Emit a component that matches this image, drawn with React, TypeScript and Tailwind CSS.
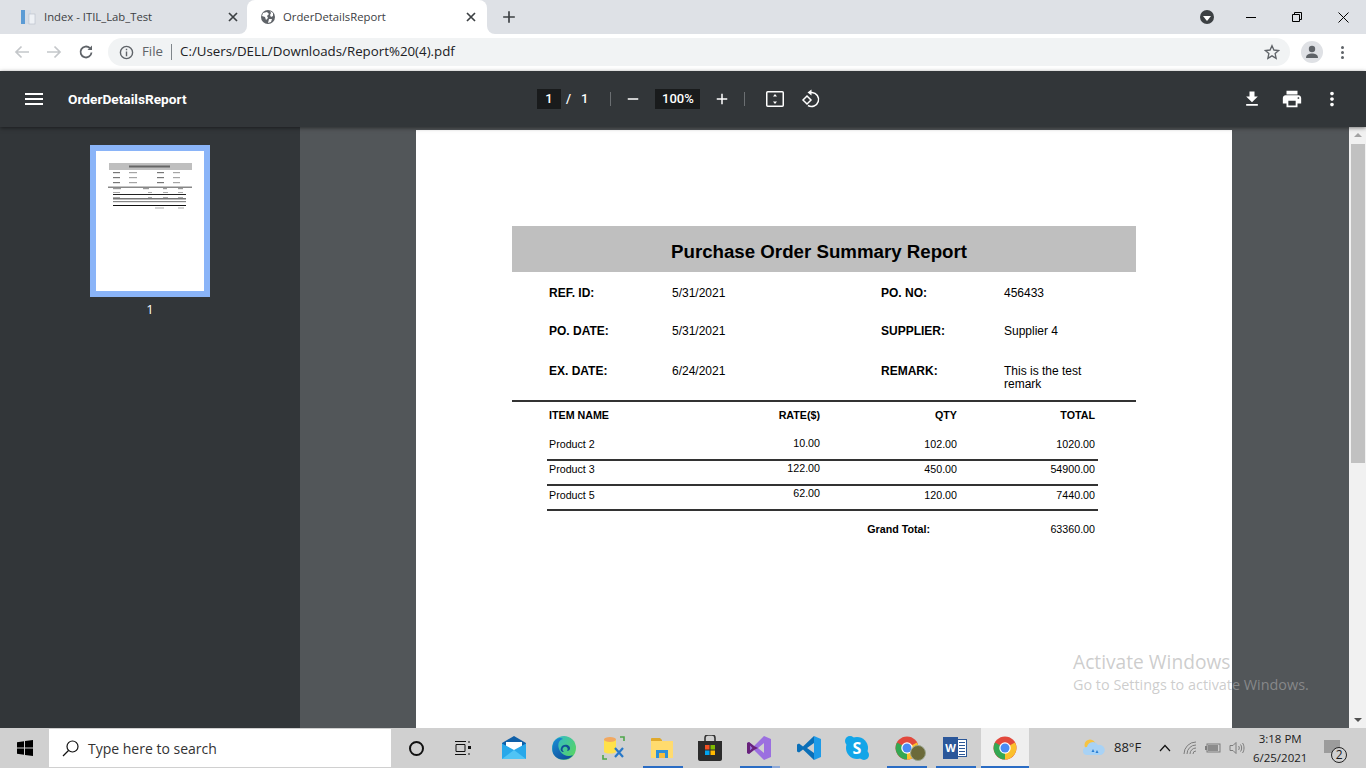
import { MdAdd, MdFileDownload, MdMenu, MdMoreVert, MdPrint, MdRemove } from "react-icons/md"

const ui = "font-['Open_Sans',sans-serif]"
const pdf = "font-['Liberation_Sans',Arial,sans-serif]"

const infoRows = [
  { label1: "REF. ID:", value1: "5/31/2021", label2: "PO. NO:", value2: "456433", pad: "pt-[14px]" },
  { label1: "PO. DATE:", value1: "5/31/2021", label2: "SUPPLIER:", value2: "Supplier 4", pad: "pt-[24px]" },
  { label1: "EX. DATE:", value1: "6/24/2021", label2: "REMARK:", value2: "This is the test remark", pad: "pt-[26px]" },
]

const items = [
  { name: "Product 2", rate: "10.00", qty: "102.00", total: "1020.00", rowH: "h-[46px]", namePt: "pt-[23px]", ratePt: "pt-[22px]" },
  { name: "Product 3", rate: "122.00", qty: "450.00", total: "54900.00", rowH: "h-[25px]", namePt: "pt-[2px]", ratePt: "pt-[1px]" },
  { name: "Product 5", rate: "62.00", qty: "120.00", total: "7440.00", rowH: "h-[25px]", namePt: "pt-[3px]", ratePt: "pt-[1px]" },
]

function ChromeLogo({ size = 24 }: { size?: number }) {
  return (
    <svg width={size} height={size} viewBox="0 0 48 48">
      <circle cx="24" cy="24" r="23" fill="#e2483c" />
      <path d="M24 24 L44 13 A23 23 0 0 1 24 47 Z" fill="#fbc02d" />
      <path d="M24 24 L24 47 A23 23 0 0 1 4 13 Z" fill="#34a853" />
      <circle cx="24" cy="24" r="11.5" fill="#fff" />
      <circle cx="24" cy="24" r="9" fill="#4a8af4" />
    </svg>
  )
}

function WindowsLogo() {
  return (
    <svg width="16" height="16" viewBox="0 0 16 16" fill="#000">
      <path d="M0 2.2 7 1.2V7.5H0zM8 1 16 0V7.5H8zM0 8.5H7V14.8L0 13.8zM8 8.5H16V16L8 15z" />
    </svg>
  )
}

function MailIcon() {
  return (
    <svg width="24" height="24" viewBox="0 0 24 24">
      <path d="M0 7 12 0 24 7V9L12 15 0 9Z" fill="#0f5fa8" />
      <path d="M4 5H20V12L12 16 4 12Z" fill="#fff" transform="translate(0 1)" />
      <path d="M0 7.5 12 14 24 7.5V23H0Z" fill="#28a8ea" />
      <path d="M0 23 12 14 24 23Z" fill="#50c4f5" />
    </svg>
  )
}

function EdgeIcon() {
  return (
    <svg width="24" height="24" viewBox="0 0 24 24">
      <defs>
        <linearGradient id="edgeA" x1="0" y1="0" x2="1" y2="0.6">
          <stop offset="0" stopColor="#2cb6d8" />
          <stop offset="1" stopColor="#55d36a" />
        </linearGradient>
        <linearGradient id="edgeB" x1="0" y1="0" x2="0.6" y2="1">
          <stop offset="0" stopColor="#1a8fd6" />
          <stop offset="1" stopColor="#10529e" />
        </linearGradient>
      </defs>
      <circle cx="12" cy="12" r="12" fill="url(#edgeA)" />
      <path d="M1 8C3 2 9 1 11 3 6 4 5 10 8 15 11 20 17 21 21 19 17 25 6 25 2 19 0 16 0 12 1 8Z" fill="url(#edgeB)" />
      <path d="M9 12C10 8 15 8 17 10 19 12 18 15 15 15 17 12 14 10 12 11 10 12 10 15 12 16 9 16 8 14 9 12Z" fill="#0f4f96" />
    </svg>
  )
}

function DbToolIcon() {
  return (
    <svg width="24" height="24" viewBox="0 0 24 24">
      <path d="M2 3H14V16C12 18 4 18 2 16Z" fill="#ffe14a" />
      <ellipse cx="8" cy="3.500" rx="6" ry="2.500" fill="#f2a860" />
      <path d="M18 1H22V5M1 19V23H5" fill="none" stroke="#4ea64a" strokeWidth="1.6" />
      <path d="M13 21 21 12M21 21 13 12" stroke="#2878c8" strokeWidth="2.2" />
    </svg>
  )
}

function FolderIcon() {
  return (
    <svg width="22" height="20" viewBox="0 0 22 20">
      <path d="M0 1C0 .5.5 0 1 0H9L11 2V5H0Z" fill="#e0a92c" />
      <rect x="0" y="3" width="22" height="17" fill="#ffdb6e" />
      <path d="M5 12H17V20H14V15H8V20H5Z" fill="#2d8fd8" />
      <rect x="8" y="15" width="6" height="5" fill="#f5bd3c" />
    </svg>
  )
}

function StoreIcon() {
  return (
    <svg width="24" height="26" viewBox="0 0 24 26">
      <path d="M7 7V3C7 1 8.5 0 10 0H14C15.500 0 17 1 17 3V7" fill="none" stroke="#333" strokeWidth="1.6" />
      <path d="M0 6H24V24C24 25 23 26 22 26H2C1 26 0 25 0 24Z" fill="#2b2b2b" />
      <rect x="7" y="10" width="4.500" height="4.500" fill="#f25022" />
      <rect x="12.500" y="10" width="4.500" height="4.500" fill="#7fba00" />
      <rect x="7" y="15.500" width="4.500" height="4.500" fill="#00a4ef" />
      <rect x="12.500" y="15.500" width="4.500" height="4.500" fill="#ffb900" />
    </svg>
  )
}

function VisualStudioIcon() {
  return (
    <svg width="24" height="24" viewBox="0 0 24 24">
      <path d="M17 0 24 3V21L17 24 7 14 2 18 0 17V7L2 6 7 10ZM17 7 11 12 17 17Z" fill="#9b6fe0" />
      <path d="M2 6 7 10 11 12 7 14 2 18 0 17V7ZM3 9.500V14.500L5.500 12Z" fill="#68217a" />
    </svg>
  )
}

function VsCodeIcon() {
  return (
    <svg width="24" height="24" viewBox="0 0 24 24">
      <path d="M17 0 24 3V21L17 24Z" fill="#1e9be8" />
      <path d="M17 0 6 10.500 2 7.500 0 8.500V15.500L2 16.500 6 13.500 17 24V17L10 12 17 7Z" fill="#0a6fb8" />
    </svg>
  )
}

function SkypeIcon() {
  return (
    <div className="relative flex h-[22px] w-[22px] items-center justify-center rounded-full bg-[#12a5e8]">
      <span className="absolute -left-[1px] -top-[1px] h-[10px] w-[10px] rounded-full bg-[#12a5e8]" />
      <span className="absolute -bottom-[1px] -right-[1px] h-[10px] w-[10px] rounded-full bg-[#12a5e8]" />
      <span className={`relative text-[16px] font-bold leading-none text-white ${ui}`}>S</span>
    </div>
  )
}

function WordIcon() {
  return (
    <div className="relative h-[22px] w-[24px]">
      <div className="absolute right-0 top-[2px] flex h-[18px] w-[14px] flex-col justify-center gap-[2px] border border-[#2b5797] bg-white pl-[5px] pr-[1px]">
        <span className="h-[1px] bg-[#2b5797]" />
        <span className="h-[1px] bg-[#2b5797]" />
        <span className="h-[1px] bg-[#2b5797]" />
        <span className="h-[1px] bg-[#2b5797]" />
        <span className="h-[1px] bg-[#2b5797]" />
      </div>
      <div className={`absolute left-0 top-0 flex h-[22px] w-[15px] items-center justify-center bg-[#2b579a] text-[11px] font-bold text-white ${ui}`}>W</div>
    </div>
  )
}

function Thumbnail() {
  return (
    <svg width="108" height="140" viewBox="0 0 108 140" className="block bg-white">
      <rect x="13" y="12" width="83" height="7" fill="#bfbfbf" />
      <rect x="33" y="14.500" width="41" height="2" fill="#666" />
      {[21, 26, 31].map((y) => (
        <g key={y}>
          <rect x="17" y={y} width="7" height="1.200" fill="#777" />
          <rect x="33" y={y} width="8" height="1.200" fill="#a5a5a5" />
          <rect x="61" y={y} width="7" height="1.200" fill="#777" />
          <rect x="77" y={y} width="7" height="1.200" fill="#a5a5a5" />
        </g>
      ))}
      <rect x="12" y="35.500" width="84" height="1.500" fill="#888" />
      <rect x="17" y="37" width="8" height="1.200" fill="#999" />
      <rect x="47" y="37" width="6" height="1.200" fill="#999" />
      <rect x="67" y="37" width="4" height="1.200" fill="#999" />
      <rect x="82" y="37" width="5" height="1.200" fill="#999" />
      {[41, 46, 50].map((y) => (
        <g key={y}>
          <rect x="17" y={y} width="7" height="1" fill="#aaa" />
          <rect x="52" y={y} width="4" height="1" fill="#aaa" />
          <rect x="67" y={y} width="5" height="1" fill="#aaa" />
          <rect x="82" y={y} width="5" height="1" fill="#aaa" />
        </g>
      ))}
      <rect x="17" y="43" width="73" height="1" fill="#222" />
      <rect x="17" y="47" width="73" height="1.500" fill="#777" />
      <rect x="17" y="50" width="73" height="1.200" fill="#888" />
      <rect x="17" y="54" width="73" height="1" fill="#111" />
      <rect x="59" y="56.500" width="9" height="1" fill="#aaa" />
      <rect x="82" y="56.500" width="6" height="1" fill="#aaa" />
    </svg>
  )
}

function CloseGlyph() {
  return (
    <svg width="10" height="10" viewBox="0 0 10 10" stroke="#3c4043" strokeWidth="1.7">
      <path d="M1 1 9 9M9 1 1 9" />
    </svg>
  )
}

function TabStrip() {
  return (
    <div className={`flex h-[34px] items-stretch bg-[#dee1e6] pl-[8px] text-[11.300px] text-[#3c4043] ${ui}`}>
      <div className="flex w-[239px] items-center pl-[12px] pr-[9px]">
        <svg width="16" height="16" viewBox="0 0 16 16">
          <rect x="1" y="1" width="4" height="14" fill="#5b9bd5" />
          <rect x="5" y="1" width="6" height="14" fill="#d5dce6" />
          <rect x="9" y="5" width="6" height="10" fill="#eef1f5" stroke="#b5bdc8" strokeWidth="0.6" />
        </svg>
        <span className="ml-[8px] flex-1">Index - ITIL_Lab_Test</span>
        <CloseGlyph />
      </div>
      <div className="relative flex w-[240px] items-center rounded-t-lg bg-white pl-[13px] pr-[11px]">
        <span className="absolute -left-[8px] bottom-0 h-[8px] w-[8px] bg-white">
          <span className="block h-full w-full rounded-br-lg bg-[#dee1e6]" />
        </span>
        <span className="absolute -right-[8px] bottom-0 h-[8px] w-[8px] bg-white">
          <span className="block h-full w-full rounded-bl-lg bg-[#dee1e6]" />
        </span>
        <svg width="16" height="16" viewBox="0 0 16 16">
          <circle cx="8" cy="8" r="7" fill="#5f6368" />
          <path d="M3 4 7 3 9 5 7 7 8 9 6 11 5 8 2 7ZM10 2 13 4 13 7 11 8 10 6 11 4ZM9 10 12 10 11 13 8 14Z" fill="#fff" />
        </svg>
        <span className="ml-[7px] flex-1">OrderDetailsReport</span>
        <CloseGlyph />
      </div>
      <div className="flex w-[44px] items-center justify-center text-[#3c4043]">
        <MdAdd size={20} />
      </div>
      <div className="flex flex-1 items-center justify-end">
        <div className="mr-[14px] flex h-[14px] w-[14px] items-center justify-center rounded-full bg-[#3c4043]">
          <span className="mt-[2px] h-0 w-0 border-x-[4px] border-t-[5px] border-x-transparent border-t-white" />
        </div>
        <div className="flex w-[46px] justify-center">
          <span className="h-[1px] w-[10px] bg-black" />
        </div>
        <div className="flex w-[46px] justify-center">
          <svg width="10" height="10" viewBox="0 0 10 10" fill="none" stroke="#000">
            <path d="M.5 2.500H7.500V9.500H.5ZM2.500 2.500V.5H9.500V7.500H7.500" />
          </svg>
        </div>
        <div className="flex w-[46px] justify-center">
          <svg width="11" height="11" viewBox="0 0 11 11" stroke="#000">
            <path d="M.5.5 10.500 10.500M10.500.5.5 10.500" />
          </svg>
        </div>
      </div>
    </div>
  )
}

function AddressBar() {
  return (
    <div className={`flex h-[36px] items-center bg-white ${ui}`}>
      <div className="flex w-[108px] items-center pl-[14px] text-[#c4c7ca]">
        <svg width="16" height="16" viewBox="0 0 16 16" fill="none" stroke="currentColor" strokeWidth="1.700">
          <path d="M15 8H2M7.500 2.500 2 8l5.500 5.500" />
        </svg>
        <svg width="16" height="16" viewBox="0 0 16 16" fill="none" stroke="currentColor" strokeWidth="1.700" className="ml-[16px]">
          <path d="M1 8H14M8.500 2.500 14 8l-5.500 5.500" />
        </svg>
        <svg width="16" height="16" viewBox="0 0 16 16" fill="none" stroke="#5f6368" strokeWidth="1.800" className="ml-[16px]">
          <path d="M13.500 8.500A5.500 5.500 0 1 1 11.800 4" />
          <path d="M14 1.500V6H9.500Z" fill="#5f6368" stroke="none" />
        </svg>
      </div>
      <div className="flex h-[28px] w-[1182px] items-center rounded-full bg-[#f1f3f4] pl-[11px] pr-[10px] text-[13.300px]">
        <svg width="15" height="15" viewBox="0 0 16 16" fill="none" stroke="#5f6368" strokeWidth="1.500">
          <circle cx="8" cy="8" r="6.500" />
          <path d="M8 7V12M8 4V5.500" />
        </svg>
        <span className="ml-[8px] text-[#5f6368]">File</span>
        <span className="mx-[8px] h-[16px] w-[1px] bg-[#80868b]" />
        <span className="flex-1 text-[#202124]">C:/Users/DELL/Downloads/Report%20(4).pdf</span>
        <svg width="16" height="16" viewBox="0 0 24 24" fill="none" stroke="#5f6368" strokeWidth="2">
          <path d="M12 2.500 14.900 9 22 9.700 16.700 14.400 18.200 21.500 12 17.800 5.800 21.500 7.300 14.400 2 9.700 9.100 9Z" />
        </svg>
      </div>
      <div className="ml-[11px] flex h-[22px] w-[22px] items-center justify-center rounded-full bg-[#dfe1e5]">
        <svg width="14" height="14" viewBox="0 0 14 14" fill="#5f6368">
          <circle cx="7" cy="4" r="3.200" />
          <path d="M1 13C1 9.500 4 8.500 7 8.500S13 9.500 13 13Z" />
        </svg>
      </div>
      <div className="ml-[18px] flex flex-col gap-[2px]">
        <span className="h-[3px] w-[3px] rounded-full bg-[#5f6368]" />
        <span className="h-[3px] w-[3px] rounded-full bg-[#5f6368]" />
        <span className="h-[3px] w-[3px] rounded-full bg-[#5f6368]" />
      </div>
    </div>
  )
}

function PdfToolbar() {
  return (
    <div className="relative z-10 mt-[1px] flex h-[56px] items-center bg-[#323639] text-white shadow-[0_1px_4px_rgba(0,0,0,0.5)] font-['Roboto',sans-serif]">
      <div className="flex w-[522px] items-center pl-[22px]">
        <MdMenu size={24} />
        <span className="ml-[22px] text-[13.700px] font-bold">OrderDetailsReport</span>
      </div>
      <div className="flex items-center text-[13px] font-medium">
        <span className="ml-[15px] flex h-[20px] w-[24px] items-center justify-center bg-[#191b1c]">1</span>
        <span className="ml-[5px]">/</span>
        <span className="ml-[10px]">1</span>
        <span className="ml-[22px] h-[14px] w-[1px] bg-[#6b6f72]" />
        <span className="ml-[13px] flex w-[18px] justify-center"><MdRemove size={18} /></span>
        <span className="ml-[13px] flex h-[20px] w-[45px] items-center justify-center bg-[#191b1c]">100%</span>
        <span className="ml-[13px] flex w-[18px] justify-center"><MdAdd size={20} /></span>
        <span className="ml-[13px] h-[14px] w-[1px] bg-[#6b6f72]" />
        <span className="ml-[21px]">
          <svg width="18" height="16" viewBox="0 0 18 16" fill="none" stroke="#fff" strokeWidth="1.500" className="block">
            <rect x=".75" y=".75" width="16.500" height="14.500" rx="1" />
            <path d="M9 3 11 5.500H7ZM9 13 7 10.500H11Z" fill="#fff" stroke="none" />
          </svg>
        </span>
        <span className="ml-[17px]">
          <svg width="20" height="20" viewBox="0 0 20 20" fill="none" stroke="#fff" strokeWidth="1.500" className="block">
            <path d="M9 3.500H11A7 7 0 1 1 7 16.500" />
            <path d="M10.500 .5V6.500L6.500 3.500Z" fill="#fff" stroke="none" />
            <path d="M6 7 10 11 6 15 2 11Z" />
          </svg>
        </span>
      </div>
      <div className="ml-auto flex items-center pr-[14px]">
        <span className="flex w-[40px] justify-center"><MdFileDownload size={20} /></span>
        <span className="flex w-[40px] justify-center"><MdPrint size={22} /></span>
        <span className="flex w-[40px] justify-center"><MdMoreVert size={22} /></span>
      </div>
    </div>
  )
}

function Report() {
  return (
    <div className={`w-[624px] text-[12px] leading-[14px] text-black ${pdf}`}>
      <div className="flex h-[46px] items-center justify-center bg-[#bfbfbf] pr-[10px] pt-[6px] text-[18.700px] font-bold">
        Purchase Order Summary Report
      </div>
      {infoRows.map((row) => (
        <div key={row.label1} className={`grid grid-cols-[123px_209px_123px_110px] pl-[37px] ${row.pad}`}>
          <span className="font-bold">{row.label1}</span>
          <span>{row.value1}</span>
          <span className="font-bold">{row.label2}</span>
          <span className="pt-[1px] leading-[13px]">{row.value2}</span>
        </div>
      ))}
      <div className="mt-[9px] border-t-2 border-[#333] text-[10.700px] leading-[12px]">
        <div className="grid h-[13px] grid-cols-[136px_135px_137px_138px] pl-[37px] pt-[7px] font-bold">
          <span>ITEM NAME</span>
          <span className="text-right">RATE($)</span>
          <span className="text-right">QTY</span>
          <span className="text-right">TOTAL</span>
        </div>
      </div>
    </div>
  )
}

function TableBody() {
  return (
    <div className={`ml-[35px] w-[551px] text-[10.700px] leading-[12px] text-black ${pdf}`}>
      {items.map((item) => (
        <div key={item.name} className={`grid grid-cols-[136px_135px_137px_138px] border-b-2 border-[#333] pl-[2px] ${item.rowH}`}>
          <span className={item.namePt}>{item.name}</span>
          <span className={`text-right ${item.ratePt}`}>{item.rate}</span>
          <span className={`text-right ${item.namePt}`}>{item.qty}</span>
          <span className={`text-right ${item.namePt}`}>{item.total}</span>
        </div>
      ))}
      <div className="grid grid-cols-[383px_165px] pt-[12px]">
        <span className="text-right font-bold">Grand Total:</span>
        <span className="text-right">63360.00</span>
      </div>
    </div>
  )
}

function Scrollbar() {
  return (
    <div className="flex w-[17px] flex-col items-center bg-[#f1f1f1]">
      <span className="mt-[6px] h-0 w-0 border-x-[4px] border-b-[4px] border-x-transparent border-b-[#a3a3a3]" />
      <span className="mt-[7px] h-[319px] w-[14px] bg-[#c1c1c1]" />
      <span className="mt-auto mb-[6px] h-0 w-0 border-x-[4px] border-t-[4px] border-x-transparent border-t-[#505050]" />
    </div>
  )
}

function Taskbar() {
  const task = "flex h-[40px] w-[48px] shrink-0 items-center justify-center"
  return (
    <div className={`flex h-[40px] items-stretch bg-[#d0d0d0] text-[#1c1c1c] ${ui}`}>
      <div className="flex w-[49px] items-center justify-center"><WindowsLogo /></div>
      <div className="my-[1px] flex w-[342px] items-center bg-white pl-[13px] text-[14px] text-[#333]">
        <svg width="17" height="17" viewBox="0 0 17 17" fill="none" stroke="#111" strokeWidth="1.200">
          <circle cx="10.500" cy="6.500" r="5.500" />
          <path d="M6.500 10.500 1 16" />
        </svg>
        <span className="ml-[9px]">Type here to search</span>
      </div>
      <div className="flex flex-1 items-center">
        <div className="ml-[1px] flex w-[48px] justify-center">
          <span className="h-[15px] w-[15px] rounded-full border-2 border-[#111]" />
        </div>
        <div className="flex w-[46px] justify-center">
          <svg width="16" height="16" viewBox="0 0 16 16" fill="none" stroke="#111">
            <path d="M0 1.500H11M1 4.500H10V11.500H1ZM0 14.500H11M14 1V3M14 13V15" />
            <rect x="13" y="6" width="3" height="3" fill="#111" stroke="none" />
          </svg>
        </div>
        <div className={`ml-[4px] ${task}`}><MailIcon /></div>
        <div className={`ml-[2px] ${task}`}><EdgeIcon /></div>
        <div className={`ml-[2px] ${task}`}><DbToolIcon /></div>
        <div className={`relative ${task}`}>
          <FolderIcon />
          <span className="absolute bottom-0 left-[5px] h-[2px] w-[40px] bg-[#2a6cc4]" />
        </div>
        <div className={task}><StoreIcon /></div>
        <div className={`ml-[1px] relative ${task}`}>
          <VisualStudioIcon />
          <span className="absolute bottom-0 left-[5px] h-[2px] w-[32px] bg-[#2a6cc4]" />
          <span className="absolute bottom-0 left-[37px] h-[2px] w-[8px] bg-[#8ea9d8]" />
        </div>
        <div className={`ml-[2px] ${task}`}><VsCodeIcon /></div>
        <div className={task}><SkypeIcon /></div>
        <div className={`ml-[2px] relative ${task}`}>
          <ChromeLogo />
          <span className="absolute left-[27px] top-[17px] h-[16px] w-[16px] rounded-full border border-[#9aa58f] bg-[#6b6a3a]" />
          <span className="absolute bottom-0 left-[4px] h-[2px] w-[40px] bg-[#2a6cc4]" />
        </div>
        <div className={`relative ${task}`}>
          <WordIcon />
          <span className="absolute bottom-0 left-[5px] h-[2px] w-[40px] bg-[#2a6cc4]" />
        </div>
        <div className={`ml-[2px] relative bg-[#efefef] ${task}`}>
          <ChromeLogo />
          <span className="absolute bottom-0 left-0 h-[2px] w-[48px] bg-[#2a6cc4]" />
        </div>
      </div>
      <div className="flex w-[285px] items-center text-[13px]">
        <svg width="22" height="20" viewBox="0 0 22 20" className="ml-[2px]">
          <circle cx="7" cy="7" r="5.500" fill="#f6c343" />
          <path d="M4 17A4 4 0 0 1 4 9 6 6 0 0 1 15 7 5 5 0 0 1 18 17Z" fill="#a8d2f5" />
          <path d="M10 11 11.500 14H8.500ZM14 12 15.500 15H12.500Z" fill="#2a7fd4" />
        </svg>
        <span className="ml-[9px] text-[13px]">88°F</span>
        <svg width="12" height="8" viewBox="0 0 12 8" fill="none" stroke="#111" strokeWidth="1.200" className="ml-[18px]">
          <path d="M1 7 6 1.500 11 7" />
        </svg>
        <svg width="14" height="14" viewBox="0 0 14 14" fill="none" stroke="#7d7d7d" className="ml-[12px]">
          <path d="M1 13A12 12 0 0 1 13 1M4 13A9 9 0 0 1 13 4M7 13A6 6 0 0 1 13 7M10 13A3 3 0 0 1 13 10" />
        </svg>
        <svg width="16" height="10" viewBox="0 0 16 10" className="ml-[8px]">
          <rect x="2" y="1" width="13" height="8" fill="none" stroke="#7d7d7d" />
          <rect x="3" y="2" width="10" height="6" fill="#8c8c8c" />
          <rect x="0" y="3" width="2" height="4" fill="#7d7d7d" />
        </svg>
        <svg width="16" height="14" viewBox="0 0 16 14" fill="none" stroke="#7d7d7d" className="ml-[8px]">
          <path d="M1 4.500H4L7 1.500V12.500L4 9.500H1ZM9.500 5C10.500 6 10.500 8 9.500 9M11.500 3.500C13 5 13 9 11.500 10.500M13.500 2C15.500 4.500 15.500 9.500 13.500 12" />
        </svg>
        <div className="flex w-[70px] flex-col items-center text-[11.500px] leading-[19px]">
          <span>3:18 PM</span>
          <span>6/25/2021</span>
        </div>
        <div className="relative ml-[12px] h-[24px] w-[24px]">
          <span className="absolute left-[-3px] top-[4px] h-[13px] w-[16px] bg-[#9c9c9c]" />
          <span className="absolute left-[4px] top-[11px] flex h-[16px] w-[16px] items-center justify-center rounded-full border border-[#222] bg-[#d0d0d0] text-[12px]">2</span>
        </div>
      </div>
    </div>
  )
}

export default function App() {
  return (
    <div className="relative h-[768px] w-[1366px] overflow-hidden bg-white">
      <TabStrip />
      <AddressBar />
      <PdfToolbar />
      <div className="flex h-[601px]">
        <aside className={`flex w-[300px] flex-col items-center bg-[#323639] pt-[18px] text-[13px] text-white ${ui}`}>
          <div className="border-[6px] border-[#8ab4f8]"><Thumbnail /></div>
          <span className="mt-[3px]">1</span>
        </aside>
        <main className="flex flex-1 justify-center bg-[#525659] pr-[1px] pt-[3px]">
          <div className="flex h-full w-[816px] flex-col bg-white pl-[96px] pt-[96px]">
            <Report />
            <TableBody />
          </div>
        </main>
        <Scrollbar />
      </div>
      <Taskbar />
      <div className={`pointer-events-none absolute left-[1073px] top-[649px] text-[#ababab]/60 ${ui}`}>
        <div className="text-[19.200px] leading-[26px]">Activate Windows</div>
        <div className="text-[14.400px] leading-[20px]">Go to Settings to activate Windows.</div>
      </div>
    </div>
  )
}
